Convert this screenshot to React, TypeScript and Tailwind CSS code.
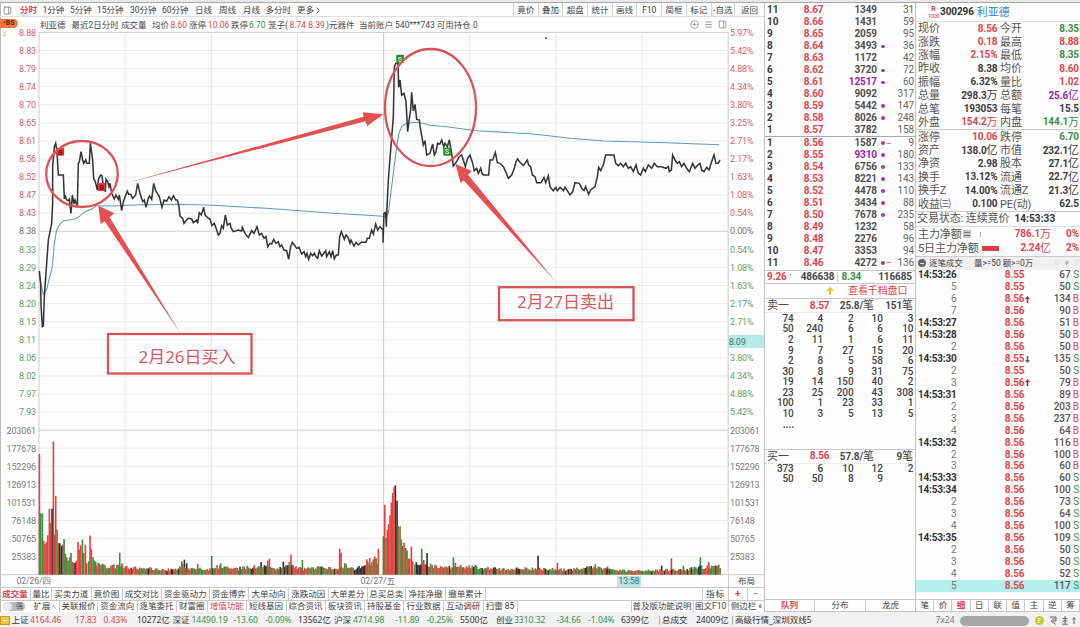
import clsx from "clsx";
import { CirclePlus, Menu, PanelRight } from "lucide-react";

const RED = "text-[#e2474b]";
const GREEN = "text-[#3a9142]";
const DARK = "text-[#3c3c3c]";
const PURPLE = "text-[#9a22b4]";

const periods = [
  { label: "分时", w: "w-[22.5px]", active: true },
  { label: "1分钟", w: "w-[27.5px]" },
  { label: "5分钟", w: "w-[27px]" },
  { label: "15分钟", w: "w-[33px]" },
  { label: "30分钟", w: "w-[32px]" },
  { label: "60分钟", w: "w-[33px]" },
  { label: "日线", w: "w-[24px]" },
  { label: "周线", w: "w-[24px]" },
  { label: "月线", w: "w-[22.5px]" },
  { label: "多分时", w: "w-[31.5px]" },
  { label: "更多", w: "w-[19px]" },
];

const tools = ["竟价", "叠加", "超盘", "统计", "画线", "F10", "简框", "标记", "-自选", "返回"];

const info = [
  { text: "利亚德", w: "w-[31.5px]" },
  { text: "最近2日分时", w: "w-[49.5px]" },
  { text: "成交量", w: "w-[31px]" },
  { text: "均价", w: "w-[18.5px]" },
  { text: "8.60", w: "w-[18.5px]", color: RED },
  { text: "涨停", w: "w-[19px]" },
  { text: "10.06", w: "w-[23px]", color: RED },
  { text: "跌停", w: "w-[18px]" },
  { text: "6.70", w: "w-[19px]", color: GREEN },
  { text: "笼子(", w: "w-[21.5px]" },
  { text: "8.74 8.39", w: "w-[36.5px]", color: RED },
  { text: ")元器件", w: "w-[33px]" },
  { text: "当前账户 540***743 可用持仓 0", w: "w-[130px]" },
];

const prices = [
  "8.88", "8.83", "8.79", "8.74", "8.70", "8.65", "8.61", "8.56", "8.52", "8.47", "8.43",
  "8.38", "8.33", "8.29", "8.24", "8.20", "8.15", "8.11", "8.06", "8.02", "7.97", "7.93",
];
const percents = [
  "5.97%", "5.42%", "4.88%", "4.34%", "3.80%", "3.25%", "2.71%", "2.17%", "1.63%", "1.08%", "0.54%",
  "0.00%", "0.54%", "1.08%", "1.63%", "2.17%", "2.71%", "", "3.80%", "4.34%", "4.88%", "5.42%",
];
const volumes = ["203061", "177678", "152296", "126913", "101531", "76148", "50765", "25383"];

// Line points are stored at three units per pixel
const priceLine =
  "118,813 122,850 123,915 127,980 130,978 133,890 140,790 145,720 152,685 155,670 158,610 158,500 163,440 167,430 171,455 175,525 190,525 193,597 195,585 200,600 205,602 208,598 213,640 217,585 222,612 225,600 232,618 235,490 238,485 243,455 248,480 251,490 257,480 260,490 268,490 271,430 278,480 281,535 286,545 292,570 296,535 302,525 306,527 310,560 316,575 318,538 323,545 327,560 330,550 335,580 343,597 348,585 355,598 358,585 365,632 370,605 382,573 386,583 392,583 398,595 407,585 413,550 420,580 428,605 433,600 438,622 445,595 449,588 455,598 461,550 467,572 472,580 478,590 486,622 492,600 500,603 507,590 514,600 520,587 527,600 532,600 537,620 540,648 548,655 552,670 560,660 565,655 575,657 580,668 590,660 593,670 598,638 604,645 611,622 615,645 622,652 630,657 636,677 643,670 650,690 655,705 660,700 665,677 670,685 676,645 682,675 690,670 694,685 700,695 715,690 725,693 727,682 735,700 745,713 755,692 762,700 771,680 778,705 785,700 792,715 798,710 803,740 810,730 815,732 821,718 828,730 835,725 840,740 845,735 852,750 860,752 866,778 872,740 877,727 883,735 890,745 897,742 905,762 912,755 917,770 921,760 926,778 932,760 938,767 943,760 948,770 953,775 958,752 965,768 970,762 977,752 980,770 988,755 993,770 998,752 1003,777 1009,765 1015,765 1019,710 1024,695 1033,718 1038,705 1044,712 1050,730 1053,720 1062,738 1068,727 1075,735 1083,727 1098,727 1102,715 1108,715 1115,690 1120,702 1127,672 1133,690 1140,680 1149,690 1149,728 1152,640 1157,637 1159,680 1162,600 1165,540 1172,450 1180,350 1183,200 1188,190 1194,190 1196,262 1200,240 1205,285 1212,280 1218,305 1223,395 1228,355 1232,330 1235,277 1240,333 1245,313 1250,358 1258,360 1262,390 1270,435 1275,422 1280,465 1290,460 1298,432 1303,465 1308,455 1313,430 1320,432 1325,420 1331,440 1335,430 1342,440 1348,420 1355,460 1360,498 1370,485 1378,470 1385,465 1390,480 1396,500 1403,475 1410,465 1418,490 1423,512 1430,505 1435,520 1442,505 1446,520 1450,525 1466,525 1470,480 1478,480 1486,457 1492,488 1500,490 1510,500 1517,515 1525,535 1535,525 1543,505 1548,485 1553,477 1560,487 1570,497 1575,490 1582,480 1586,495 1592,500 1597,525 1605,530 1610,548 1623,548 1632,532 1637,548 1645,527 1650,560 1660,572 1668,562 1672,572 1680,562 1690,572 1695,562 1702,572 1710,585 1718,575 1725,548 1738,550 1745,565 1752,572 1757,560 1766,583 1772,570 1785,560 1792,530 1796,502 1802,512 1810,495 1817,465 1842,465 1847,490 1855,497 1862,490 1870,500 1877,490 1885,505 1892,500 1900,515 1908,495 1915,520 1922,525 1930,505 1936,515 1945,495 1955,505 1963,490 1972,500 1985,500 1998,505 2005,500 2008,515 2014,510 2018,465 2025,480 2032,490 2038,485 2045,500 2052,490 2060,505 2068,515 2078,490 2085,505 2093,495 2100,490 2105,510 2112,515 2120,502 2127,510 2135,485 2142,465 2148,490 2155,490 2160,480";
const averageLine =
  "118,820 122,850 130,883 140,868 148,835 157,800 163,730 170,690 180,672 192,662 225,657 235,652 255,635 275,627 290,617 340,618 400,615 530,613 640,616 800,625 1000,640 1140,648 1158,650 1165,640 1170,600 1180,520 1190,440 1197,400 1205,380 1215,372 1240,367 1270,370 1290,376 1340,380 1430,392 1600,402 1710,415 1810,423 2000,428 2158,434";

// [x, height, colour]
const spikes: [number, number, string][] = [
  [118, 362, "r"], [122, 184, "g"], [127, 184, "g"], [131, 102, "r"], [135, 92, "r"], [139, 97, "r"], [143, 118, "r"],
  [148, 198, "r"], [152, 155, "r"], [156, 198, "k"], [160, 400, "r"], [164, 120, "r"], [167, 236, "r"], [171, 135, "o"],
  [175, 95, "o"], [179, 94, "k"], [184, 86, "k"], [188, 90, "o"], [192, 107, "g"], [196, 62, "g"], [200, 52, "o"],
  [204, 42, "g"], [209, 52, "o"], [213, 65, "g"], [217, 38, "o"], [221, 36, "r"], [225, 36, "k"], [229, 42, "r"],
  [234, 98, "r"], [238, 75, "r"], [242, 88, "r"], [247, 105, "g"], [251, 65, "o"], [256, 90, "r"], [260, 34, "r"],
  [266, 40, "g"], [270, 117, "r"], [274, 76, "r"], [279, 52, "g"], [283, 42, "g"], [287, 38, "g"], [359, 66, "g"],
  [366, 34, "r"], [545, 40, "r"], [553, 45, "k"], [560, 34, "k"], [593, 32, "r"], [635, 56, "g"], [662, 34, "g"],
  [783, 38, "k"], [803, 42, "r"], [808, 48, "r"], [850, 39, "k"], [868, 38, "r"], [873, 60, "r"], [907, 44, "g"],
  [1019, 78, "r"], [1023, 66, "r"], [1100, 46, "r"], [1109, 50, "r"], [1124, 55, "r"], [1135, 78, "r"], [1150, 115, "g"],
  [1154, 210, "r"], [1158, 110, "o"], [1162, 135, "r"], [1166, 152, "r"], [1170, 178, "r"], [1174, 216, "r"],
  [1178, 245, "r"], [1182, 262, "r"], [1186, 268, "k"], [1191, 222, "k"], [1195, 145, "o"], [1200, 145, "o"],
  [1204, 105, "g"], [1208, 86, "o"], [1212, 96, "r"], [1217, 80, "g"], [1221, 72, "g"], [1225, 48, "r"], [1229, 48, "r"],
  [1234, 84, "r"], [1238, 40, "r"], [1265, 78, "g"], [1271, 44, "g"], [1281, 65, "k"], [1360, 52, "g"], [1366, 36, "r"],
  [1614, 57, "k"], [1672, 36, "r"], [1786, 32, "r"], [1822, 25, "r"], [1985, 27, "k"], [2014, 49, "r"], [2050, 27, "g"],
  [2101, 52, "g"], [2126, 38, "r"],
];

const envelope: [number, number][] = [
  [118, 90], [290, 38], [310, 32], [350, 29], [400, 26], [500, 18], [530, 20], [550, 38], [565, 24], [620, 18],
  [660, 30], [700, 20], [750, 28], [800, 30], [820, 22], [870, 34], [900, 22], [960, 24], [1010, 20], [1035, 34],
  [1060, 20], [1090, 30], [1105, 45], [1145, 55], [1149, 40], [1230, 42], [1245, 40], [1290, 34], [1330, 24],
  [1400, 30], [1440, 26], [1500, 20], [1600, 22], [1700, 18], [1780, 26], [1830, 18], [1900, 14], [2050, 18],
  [2110, 28], [2162, 30],
];

const barColors: Record<string, string> = { r: "#e5423f", g: "#37923b", k: "#35302f", o: "#8a7039" };

function buildBars() {
  const bars = spikes.map(([x, h, c]) => ({ x, h, c }));
  let seed = 17;
  const rand = () => {
    seed = (seed * 16807) % 2147483647;
    return seed / 2147483647;
  };
  for (let x = 290; x < 2162; x += 4.3) {
    if (x > 1137 && x < 1242) continue;
    const i = envelope.findIndex((p) => p[0] > x);
    const [x0, h0] = envelope[i - 1];
    const [x1, h1] = envelope[i];
    const top = h0 + ((h1 - h0) * (x - x0)) / (x1 - x0);
    const c = (x > 1060 && x < 1095) || (x > 1245 && x < 1260) ? "k" : x > 1095 && x < 1140 ? "rro"[Math.floor(rand() * 3)] : "rrggkoo"[Math.floor(rand() * 7)];
    bars.push({ x, h: top * (0.6 + rand() * 0.45), c });
  }
  return bars.sort((a, b) => b.h - a.h);
}
const bars = buildBars();

const asks = [
  ["11", "8.67", "1349", "", "31"],
  ["10", "8.66", "1431", "", "59"],
  ["9", "8.65", "2059", "", "95"],
  ["8", "8.64", "3493", "•", "36"],
  ["7", "8.63", "1172", "", "42"],
  ["6", "8.62", "3720", "•", "72"],
  ["5", "8.61", "12517", "•", "60"],
  ["4", "8.60", "9092", "", "317"],
  ["3", "8.59", "5442", "•", "147"],
  ["2", "8.58", "8026", "•", "248"],
  ["1", "8.57", "3782", "", "158"],
];
const bids = [
  ["1", "8.56", "1587", "•-", "9"],
  ["2", "8.55", "9310", "•", "180"],
  ["3", "8.54", "6756", "•", "133"],
  ["4", "8.53", "8221", "•", "143"],
  ["5", "8.52", "4478", "•", "110"],
  ["6", "8.51", "3434", "•", "88"],
  ["7", "8.50", "7678", "•", "235"],
  ["8", "8.49", "1232", "", "58"],
  ["9", "8.48", "2276", "", "96"],
  ["10", "8.47", "3353", "", "94"],
  ["11", "8.46", "4272", "•-", "136"],
];

const sellQueue = [
  [74, 4, 2, 10, 3],
  [50, 240, 6, 6, 10],
  [2, 11, 1, 6, 11],
  [9, 7, 27, 15, 20],
  [2, 8, 5, 58, 6],
  [30, 8, 9, 31, 75],
  [19, 14, 150, 40, 2],
  [23, 25, 200, 43, 308],
  [100, 1, 23, 33, 1],
  [10, 3, 5, 13, 5],
];
const buyQueue = [
  [373, 6, 10, 12, 2],
  [50, 50, 8, 9],
];

type Stat = [string, string, string, string, string, string];
const statsTop: Stat[] = [
  ["现价", "8.56", RED, "今开", "8.35", GREEN],
  ["涨跌", "0.18", RED, "最高", "8.88", RED],
  ["涨幅", "2.15%", RED, "最低", "8.35", GREEN],
  ["昨收", "8.38", DARK, "均价", "8.60", RED],
  ["振幅", "6.32%", DARK, "量比", "1.02", RED],
  ["总量", "298.3万", DARK, "总额", "25.6亿", PURPLE],
  ["总笔", "193053", DARK, "每笔", "15.5", DARK],
  ["外盘", "154.2万", RED, "内盘", "144.1万", GREEN],
];
const statsBottom: Stat[] = [
  ["涨停", "10.06", RED, "跌停", "6.70", GREEN],
  ["资产", "138.0亿", DARK, "市值", "232.1亿", DARK],
  ["净资", "2.98", DARK, "股本", "27.1亿", DARK],
  ["换手", "13.12%", DARK, "流通", "22.7亿", DARK],
  ["换手Z", "14.00%", DARK, "流通Z", "21.3亿", DARK],
  ["收益㈢", "0.100", DARK, "PE(动)", "62.5", DARK],
];

const ticks: [string, string, string, string, string][] = [
  ["14:53:26", "8.55", "", "67", "S"],
  ["5", "8.55", "", "50", "S"],
  ["6", "8.56", "up", "134", "B"],
  ["7", "8.56", "", "90", "B"],
  ["14:53:27", "8.56", "", "51", "B"],
  ["14:53:28", "8.56", "", "50", "B"],
  ["2", "8.56", "", "50", "B"],
  ["14:53:30", "8.55", "down", "135", "S"],
  ["2", "8.55", "", "50", "S"],
  ["3", "8.56", "up", "79", "B"],
  ["14:53:31", "8.56", "", "89", "B"],
  ["2", "8.56", "", "203", "B"],
  ["3", "8.56", "", "237", "B"],
  ["4", "8.56", "", "64", "B"],
  ["14:53:32", "8.56", "", "116", "B"],
  ["2", "8.56", "", "100", "B"],
  ["3", "8.56", "", "60", "B"],
  ["14:53:33", "8.56", "", "60", "S"],
  ["14:53:34", "8.56", "", "100", "S"],
  ["2", "8.56", "", "73", "S"],
  ["3", "8.56", "", "64", "S"],
  ["4", "8.56", "", "100", "S"],
  ["14:53:35", "8.56", "", "109", "S"],
  ["2", "8.56", "", "50", "S"],
  ["3", "8.56", "", "50", "S"],
  ["4", "8.56", "", "52", "S"],
  ["5", "8.56", "", "117", "S"],
];

const indicatorTabs = [
  { label: "成交量", w: "w-[31px]", active: true },
  { label: "量比", w: "w-[21px]" },
  { label: "买卖力道", w: "w-[39.5px]" },
  { label: "竟价图", w: "w-[31px]" },
  { label: "成交对比", w: "w-[39.5px]" },
  { label: "资金驱动力", w: "w-[47.5px]" },
  { label: "资金博弈", w: "w-[39.5px]" },
  { label: "大单动向", w: "w-[40px]" },
  { label: "涨跌动因", w: "w-[39.5px]" },
  { label: "大单差分", w: "w-[39px]" },
  { label: "总买总卖", w: "w-[38.5px]" },
  { label: "净挂净撤", w: "w-[40px]" },
  { label: "撤单累计", w: "w-[39.5px]" },
];

const featureTabs = [
  { label: "扩展", w: "w-[29px]", caret: true },
  { label: "关联报价", w: "w-[38px]" },
  { label: "资金流向", w: "w-[39.5px]" },
  { label: "逐笔委托", w: "w-[39px]" },
  { label: "财富圈", w: "w-[31.5px]" },
  { label: "增值功能", w: "w-[38.5px]", active: true },
  { label: "短线基因", w: "w-[40px]" },
  { label: "综合资讯", w: "w-[39px]" },
  { label: "板块资讯", w: "w-[39.5px]" },
  { label: "持股基金", w: "w-[39px]" },
  { label: "行业数据", w: "w-[40px]" },
  { label: "互动调研", w: "w-[39.5px]" },
  { label: "扫雷 85", w: "w-[34px]" },
];

const indices = [
  { text: "上证", w: "w-[18.5px]" },
  { text: "4164.46", w: "w-[45px]", color: RED },
  { text: "17.83", w: "w-[28.5px]", color: RED },
  { text: "0.43%", w: "w-[33.5px]", color: RED },
  { text: "10272亿", w: "w-[35.5px]" },
  { text: "深证", w: "w-[19px]" },
  { text: "14490.19", w: "w-[42px]", color: GREEN },
  { text: "-13.60", w: "w-[31.5px]", color: GREEN },
  { text: "-0.09%", w: "w-[33px]", color: GREEN },
  { text: "13562亿", w: "w-[36px]" },
  { text: "沪深", w: "w-[19px]" },
  { text: "4714.98", w: "w-[42px]", color: GREEN },
  { text: "-11.89", w: "w-[31.5px]", color: GREEN },
  { text: "-0.25%", w: "w-[33.5px]", color: GREEN },
  { text: "5500亿", w: "w-[36px]" },
  { text: "创业", w: "w-[18px]" },
  { text: "3310.32", w: "w-[42.5px]", color: GREEN },
  { text: "-34.66", w: "w-[31.5px]", color: GREEN },
  { text: "-1.04%", w: "w-[33px]", color: GREEN },
  { text: "6399亿", w: "w-[38px]" },
];

// Numbers are bold, the 万/亿 unit behind them is larger and light
function Value({ text, color }: { text: string; color: string }) {
  const unit = /[万亿]$/.test(text) ? text.slice(-1) : "";
  return (
    <span className={clsx("flex items-center justify-end", color)}>
      <b>{unit ? text.slice(0, -1) : text}</b>
      {unit && <span className="text-[11px]">{unit}</span>}
    </span>
  );
}

function StatRow({ row }: { row: Stat }) {
  return (
    <div className="flex h-[13.4px] items-center pl-[2px] pr-px">
      <span className="w-[30px] text-[11px] text-[#555]">{row[0]}</span>
      <span className="w-[49.5px]"><Value text={row[1]} color={row[2]} /></span>
      <span className="ml-[2.5px] w-[36px] text-[11px] text-[#555]">{row[3]}</span>
      <span className="flex-1"><Value text={row[4]} color={row[5]} /></span>
    </div>
  );
}

function DepthRow({ row }: { row: string[] }) {
  const big = row[2] === "12517" || row[2] === "9310";
  return (
    <div className="flex h-[11.97px] items-center pl-[2px] pr-px">
      <b className="w-[26px] text-[#3c3c3c]">{row[0]}</b>
      <b className={clsx("w-[30.5px] text-right", RED)}>{row[1]}</b>
      <b className={clsx("w-[53.5px] text-right", big ? PURPLE : "text-[#505050]")}>{row[2]}</b>
      <span className="flex w-[16px] items-center gap-[2.5px] pl-[4px]">
        {row[3] && <i className="size-[3.5px] rounded-full bg-[#b02cc4]" />}
        {row[3] === "•-" && <i className="h-px w-[4px] bg-[#999]" />}
      </span>
      <span className="flex-1 text-right text-[#666]">{row[4]}</span>
    </div>
  );
}

function QueueHead({ side, price, avg, count }: { side: string; price: string; avg: string; count: string }) {
  return (
    <div className="flex h-[14px] items-center border-b border-dotted border-[#ddd] pl-[2px] pr-[2px] text-[#4a4a4a]">
      <span className="w-[30px] text-[11px]">{side}</span>
      <b className={clsx("w-[32.5px] text-right", RED)}>{price}</b>
      <span className="w-[44.5px] text-right"><b>{avg}/</b><span className="text-[11px]">笔</span></span>
      <span className="flex-1 text-right"><b>{count}</b><span className="text-[11px]">笔</span></span>
    </div>
  );
}

function QueueRows({ rows }: { rows: number[][] }) {
  return (
    <>
      {rows.map((row, i) => (
        <div key={i} className="grid h-[10.55px] grid-cols-[28.7px_29.3px_30.5px_29.3px_30.6px] items-center text-right font-medium text-[#444]">
          {row.map((n, j) => <span key={j}>{n}</span>)}
        </div>
      ))}
    </>
  );
}

function Marker({ x, y, kind }: { x: number; y: number; kind: "B" | "S" }) {
  return (
    <g>
      <rect x={x} y={y} width="7.6" height="8" fill={kind === "B" ? "#e8333c" : "#1f8a24"} />
      <text x={x + 3.8} y={y + 6.8} textAnchor="middle" fontSize="7.5" fontWeight="700" fill={kind === "B" ? "#7d1016" : "#c9f5c0"}>
        {kind}
      </text>
    </g>
  );
}

function Chart() {
  const step = 18.08;
  return (
    <svg className="block h-[543px] w-[764px] overflow-visible" viewBox="0 32 764 543">
      {Array.from({ length: 30 }, (_, i) => (
        <line
          key={i}
          x1="39"
          x2="728"
          y1={32.4 + step * i}
          y2={32.4 + step * i}
          stroke={i === 0 || i === 11 || i === 22 ? "#cfcfcf" : "#ececec"}
          strokeWidth="1"
        />
      ))}
      {Array.from({ length: 9 }, (_, i) => (
        <line
          key={i}
          x1={39 + 86.15 * i}
          x2={39 + 86.15 * i}
          y1="32"
          y2="575"
          stroke={i % 4 === 0 ? "#c8ccce" : "#e6e6e9"}
          strokeWidth="1"
        />
      ))}
      <line x1="0" x2="764" y1="574.7" y2="574.7" stroke="#ccc" />

      <g fontSize="9" letterSpacing="-0.15">
        {prices.map((p, i) => (
          <text key={p} x="36" y={35.6 + step * i} textAnchor="end" fill={i < 11 ? "#e0616c" : i === 11 ? "#777" : "#61a566"}>
            {p}
          </text>
        ))}
        {percents.map((p, i) => (
          <text key={i} x="730" y={35.6 + step * i} fill={i < 11 ? "#e0616c" : i === 11 ? "#777" : "#61a566"}>
            {p}
          </text>
        ))}
        {volumes.map((v, i) => (
          <g key={v} fill="#7c7c7c">
            <text x="36" y={433.6 + step * i} textAnchor="end">{v}</text>
            <text x="730" y={433.6 + step * i}>{v}</text>
          </g>
        ))}
        <rect x="728.5" y="335" width="35.5" height="13" fill="#b4e9e7" />
        <text x="728.7" y="344.5" fill="#4f6f6f">8.09</text>
      </g>

      <g transform="scale(0.33333)">
        {bars.map((b, i) => (
          <rect key={i} x={b.x - 2.3} y={1724 - b.h} width="4.9" height={b.h} fill={barColors[b.c]} />
        ))}
        <polyline points={averageLine} fill="none" stroke="#5d9bc9" strokeWidth="3.2" />
        <polyline points={priceLine} fill="none" stroke="#353535" strokeWidth="4.6" />
        <path d="M377 550L1091 350L1088 337L1150 343L1102 378L1096 364Z" fill="#e4504f" />
        <path d="M540 998L314 664L302 672L295 617L343 640L329 652Z" fill="#e4504f" />
        <path d="M1668 846L1391 541L1382 549L1366 491L1415 513L1404 524Z" fill="#e4504f" />
      </g>

      <Marker x={56.5} y={147.7} kind="B" />
      <Marker x={97.8} y={183} kind="B" />
      <Marker x={396.3} y={54.8} kind="S" />
      <Marker x={443.3} y={147.6} kind="S" />
      <rect x="545" y="37" width="2" height="2" fill="#c03ad0" />

      <g fill="none" stroke="#dc5254" strokeWidth="2.3">
        <ellipse cx="82" cy="174" rx="35.8" ry="33" />
        <ellipse cx="430.5" cy="107.5" rx="45.5" ry="58.5" />
        <rect x="108" y="334" width="143.5" height="39.5" />
        <rect x="499" y="287.2" width="134.5" height="33" />
      </g>
      <g fill="#d8585c" fontSize="17" fontFamily="'Open Sans','Noto Sans CJK SC',sans-serif">
        <text x="138.5" y="362.5" textLength="97">2月26日买入</text>
        <text x="517" y="308" textLength="97">2月27日卖出</text>
      </g>
    </svg>
  );
}

function ChartPanel() {
  return (
    <div className="flex w-[764px] flex-col border-l border-[#bbb]">
      <div className="-ml-px flex h-[14px] items-center border-b border-[#ddd] text-[#444]">
        <PanelRight className="ml-[3px] mr-[8px] mt-px size-[9px] text-[#777]" strokeWidth={2} />
        {periods.map((p) => (
          <span key={p.label} className={clsx("pt-px", p.w, p.active && "font-bold text-[#e2474b]")}>{p.label}</span>
        ))}
        <svg className="mt-px h-[7px] w-[4px]" viewBox="0 0 4 7" fill="none" stroke="#888">
          <path d="M0.5 0.5L3.5 3.5L0.5 6.5" />
        </svg>
        <div className="ml-auto flex h-full">
          {tools.map((t) => (
            <span
              key={t}
              className={clsx(
                "flex items-center justify-center border-l border-[#d5d5d5] pt-px",
                t === "返回" ? "w-[30px]" : t === "-自选" ? "w-[23.5px]" : "w-[24.7px]",
              )}
            >
              {t}
            </span>
          ))}
        </div>
      </div>

      <div className="-ml-px flex h-[15px] items-center text-[#4a4a4a]">
        <div className="relative h-full w-[40px]">
          <span className="mt-[2px] flex h-[9px] w-[18px] items-center justify-center rounded-r-full bg-[#ee7b3a] text-[7px] font-bold text-[#5c2308]">•BS</span>
          <svg className="absolute left-[2px] top-[14px] h-[6px] w-[5px]" viewBox="0 0 5 6" fill="none" stroke="#c9b36a" strokeWidth="0.9">
            <path d="M0.5 0.5L2.5 2L4.5 0.5M0.5 3.5L2.5 5L4.5 3.5" />
          </svg>
        </div>
        {info.map((s) => (
          <span key={s.text} className={clsx("pt-px", s.w, s.color)}>{s.text}</span>
        ))}
        <div className="ml-auto mr-[37px] flex items-center gap-[5px] text-[#888]">
          <CirclePlus className="size-[9px]" />
          <Menu className="size-[9px]" />
          <PanelRight className="size-[9px]" />
        </div>
      </div>

      <div className="-ml-px">
        <Chart />
      </div>

      <div className="-ml-px flex h-[12px] items-center text-[#777]">
        <span className="ml-[16.5px] w-[344px]">02/26/四</span>
        <span className="w-[256.5px]">02/27/五</span>
        <span className="flex h-[11px] w-[24px] items-center justify-center bg-[#b4e9e7] text-[#4f6f6f]">13:58</span>
        <span className="ml-auto flex h-full w-[36px] items-center justify-center border-l border-[#ccc] text-[#444]">布局</span>
      </div>

      <div className="-ml-px flex h-[13px] items-center border-t border-[#c8c8c8] text-[#444]">
        {indicatorTabs.map((t) => (
          <span key={t.label} className={clsx("flex h-full items-center justify-center border-r border-[#ccc]", t.w, t.active && "font-bold text-[#e2474b]")}>
            {t.label}
          </span>
        ))}
        <span className="ml-auto flex h-full w-[26px] items-center justify-center border-l border-[#ccc] tracking-[1px]">指标</span>
        <span className="flex h-full w-[18.5px] items-center justify-center border-l border-[#ccc] text-[10px] font-bold text-[#e2474b]">+</span>
        <span className="flex h-full w-[17.5px] items-center justify-center border-l border-[#ccc]">−</span>
      </div>

      <div className="-ml-px flex h-[12px] items-center border-t border-[#c8c8c8] text-[#444]">
        <span className="ml-[3px] mr-[6px] flex h-[9px] w-[22px] items-center justify-end rounded-full bg-[#b9b9b9] pr-[2px] text-[7px] text-[#555]">
          <i className="mr-auto size-[9px] rounded-full bg-[#e9e9e9]" />强
        </span>
        {featureTabs.map((t) => (
          <span key={t.label} className={clsx("flex h-full items-center justify-center border-r border-[#ccc]", t.w, t.active && "text-[#e2474b]")}>
            {t.label}
            {t.caret && <span className="text-[6px] text-[#999]">∧</span>}
          </span>
        ))}
        <span className="ml-auto flex h-full w-[62px] items-center justify-center border-l border-[#ccc] tracking-[-0.1px]">普及版功能说明</span>
        <span className="flex h-full w-[35.5px] items-center justify-center border-l border-[#ccc]">图文F10</span>
        <span className="flex h-full w-[36px] items-center justify-center border-l border-[#ccc]">侧边栏 «</span>
      </div>
    </div>
  );
}

function DepthPanel() {
  return (
    <div className="flex w-[152px] flex-col border-x border-[#c4c4c4] text-[10px] tracking-[-0.1px]">
      <div className="border-b border-[#aaa] pt-[1.5px]">
        {asks.map((r) => <DepthRow key={r[0]} row={r} />)}
      </div>
      <div className="border-b border-[#c8c8c8] pb-[1.3px]">
        {bids.map((r) => <DepthRow key={r[0]} row={r} />)}
      </div>
      <div className="flex h-[13px] items-center border-b border-[#c8c8c8] pl-[2px] pr-[3px] font-bold text-[#4a4a4a]">
        <span className={RED}>9.26</span>
        <span className="ml-px text-[8px] font-normal text-[#aaa]">?</span>
        <span className="ml-auto">486638</span>
        <span className={clsx("ml-[3px] border-l border-[#ccc] pl-[3px]", GREEN)}>8.34</span>
        <span className="ml-[17px]">116685</span>
      </div>
      <div className="flex h-[15px] items-center border-b border-[#c8c8c8]">
        <svg className="ml-[61px] h-[8px] w-[8px]" viewBox="0 0 8 8">
          <path d="M4 0L8 4H5V8H3V4H0Z" fill="#e8c23a" />
        </svg>
        <span className="ml-[14px] text-[#e2474b]">查看千档盘口</span>
      </div>
      <QueueHead side="卖一" price="8.57" avg="25.8" count="151" />
      <div className="h-[135.5px] pt-[0.5px]">
        <QueueRows rows={sellQueue} />
        <div className="w-[29px] text-right font-bold leading-[12px] text-[#555]">....</div>
      </div>
      <div className="border-t border-[#c8c8c8]">
        <QueueHead side="买一" price="8.56" avg="57.8" count="9" />
        <QueueRows rows={buyQueue} />
      </div>
      <div className="mt-auto flex h-[13px] border-y border-[#c8c8c8] text-[8.5px] text-[#444]">
        <span className="flex w-[49px] items-center justify-center font-bold text-[#e2474b]">队列</span>
        <span className="flex w-[51px] items-center justify-center border-l border-[#ccc]">分布</span>
        <span className="flex flex-1 items-center justify-center border-l border-[#ccc]">龙虎</span>
      </div>
    </div>
  );
}

function QuotePanel() {
  return (
    <div className="flex w-[164px] flex-col text-[10px] tracking-[-0.1px]">
      <div className="flex h-[18.5px] items-center border-b border-[#ddd] pl-[11px] pt-px">
        <span className="flex w-[13px] flex-col items-center text-[#e2474b]">
          <b className="text-[7px] leading-[7px]">R</b>
          <span className="text-[6px] leading-[6px] tracking-[-0.5px]">1000</span>
        </span>
        <b className="text-[#333]">300296</b>
        <span className="ml-[3px] text-[11px] text-[#2f86cc]">利亚德</span>
      </div>
      <div className="h-[108px] border-b border-[#ccc] pt-[0.5px]">
        {statsTop.map((r) => <StatRow key={r[0]} row={r} />)}
      </div>
      <div className="h-[82px] border-b border-[#ccc] pt-px">
        {statsBottom.map((r) => <StatRow key={r[0]} row={r} />)}
      </div>
      <div className="flex h-[15px] items-center border-b border-[#ddd] pl-px text-[11px] text-[#555]">
        交易状态: 连续竞价<b className="ml-[5px] text-[10px] tracking-[0.1px] text-[#333]">14:53:33</b>
      </div>
      <div className="flex h-[15px] items-center pl-[2px] pr-px">
        <span className="text-[11px] text-[#555]">主力净额</span>
        <span className="ml-px flex h-[8px] w-[8px] flex-col justify-evenly bg-[#c4c4c4] px-px">
          <i className="h-px bg-[#777]" />
          <i className="h-px bg-[#777]" />
        </span>
        <i className="ml-[9px] h-[5px] w-px bg-[#aaa]" />
        <span className="ml-auto"><Value text="786.1万" color={RED} /></span>
        <b className={clsx("w-[28px] text-right", RED)}>0%</b>
      </div>
      <div className="flex h-[14.5px] items-center pb-px pl-[2px] pr-px">
        <span className="text-[11px] text-[#555]">5日主力净额</span>
        <i className="ml-[3px] h-[5px] w-[17px] bg-[#dd3b40]" />
        <span className="ml-auto"><Value text="2.24亿" color={RED} /></span>
        <b className={clsx("w-[28px] text-right", RED)}>2%</b>
      </div>
      <div className="flex h-[13.5px] items-center border-t border-[#ccc] bg-[#f0f0f0] pl-[2px] pr-px text-[8.5px] text-[#444]">
        <span className="flex size-[8px] items-center justify-center rounded-full bg-[#666]">
          <i className="h-px w-[4px] bg-[#ddd]" />
        </span>
        <span className="ml-[3px] w-[45px]">逐笔成交</span>
        <span>量&gt;=50 额&gt;=0万</span>
        <span className="ml-auto flex gap-[4px] text-[6px] text-[#bbb]"><i>▽</i><i>♦</i><i>▽</i></span>
      </div>
      {ticks.map((t, i) => (
        <div key={i} className={clsx("flex h-[11.94px] items-center pl-[2px] pr-px", i === ticks.length - 1 && "bg-[#b4efed]")}>
          {t[0].length > 1 ? (
            <b className="w-[38.5px] whitespace-nowrap tracking-[-0.2px] text-[#333]">{t[0]}</b>
          ) : (
            <span className="w-[38.5px] text-right text-[#777]">{t[0]}</span>
          )}
          <b className={clsx("w-[68px] text-right", RED)}>{t[1]}</b>
          <span className="w-[7px]">
            {t[2] && (
              <svg className={clsx("ml-[0.5px] h-[7px] w-[5px]", t[2] === "down" && "rotate-180")} viewBox="0 0 5 7">
                <path d="M2.5 0L5 3H3.3V7H1.7V3H0Z" fill={t[2] === "up" ? "#c8242c" : "#2d8436"} />
              </svg>
            )}
          </span>
          <span className="flex-1 text-right font-medium text-[#555]">{t[3]}</span>
          <span className={clsx("w-[8.5px] text-right", t[4] === "S" ? GREEN : RED)}>{t[4]}</span>
        </div>
      ))}
      <div className="mt-auto grid h-[13px] grid-cols-9 border-y border-[#c8c8c8] text-[8.5px] text-[#444]">
        {["笔", "价", "细", "日", "联", "值", "主", "逆", "筹"].map((c) => (
          <span key={c} className={clsx("flex items-center justify-center border-r border-[#ccc]", c === "细" && "font-bold text-[#e2474b]")}>{c}</span>
        ))}
      </div>
    </div>
  );
}

function StatusBar() {
  return (
    <div className="flex h-[15px] items-center bg-[#f1f1f1] pt-[2px] text-[#333] [font-family:'Noto_Sans','Noto_Sans_CJK_SC',sans-serif]">
      <span className="flex h-[9px] w-[9.5px] items-center justify-center border border-[#c99a22] bg-[#f5c542]">
        <i className="h-px w-[4px] bg-white" />
      </span>
      <span className="w-[2px]" />
      {indices.map((s, i) => (
        <span key={i} className={clsx(s.w, s.color)}>{s.text}</span>
      ))}
      <span className="w-[37px] border-l border-[#aaa] pl-[2px]">总成交</span>
      <span className="w-[36px]">24009亿</span>
      <span className="w-[203.5px] border-l border-[#aaa] pl-[2px]">高级行情_深圳双线5</span>
      <span className="w-[24px] text-[#777]">7x24</span>
      <span className="h-[10px] w-[69px] rounded-full bg-[#a6a6a6]" />
      <span className="ml-[6px] flex size-[9px] items-center justify-center rounded-full bg-[#c3cc2c] text-[7px] font-bold text-white">?</span>
      <svg className="ml-[5px] h-[9px] w-[28px]" viewBox="0 0 28 9" fill="none" stroke="#666">
        <path d="M1 1H7V5H2L7 8.5M3 3H7" />
        <path d="M16 0V8M13.5 2.5H18.5M13.5 5H18.5M13 8.2H19" />
        <path d="M25 8V2M23.5 3.5L25 1.5L26.5 3.5" />
      </svg>
    </div>
  );
}

export default function App() {
  return (
    <div className="flex h-[627px] w-[1080px] flex-col overflow-hidden whitespace-nowrap bg-[#fdfdfd] text-[8.5px] leading-none [font-family:Roboto,'Noto_Sans_CJK_SC',sans-serif]">
      <div className="h-[3px] border-b border-[#a8a8a8] bg-[#e9e9e9]" />
      <div className="flex h-[609px]">
        <ChartPanel />
        <DepthPanel />
        <QuotePanel />
      </div>
      <StatusBar />
    </div>
  );
}
